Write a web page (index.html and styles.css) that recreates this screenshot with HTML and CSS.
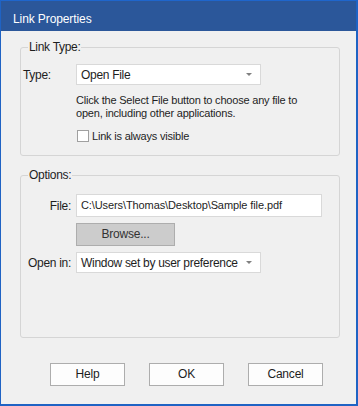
FILE: index.html
```html
<!DOCTYPE html>
<html>
<head>
<meta charset="utf-8">
<link rel="stylesheet" href="styles.css">
</head>
<body>
<div class="window">
  <div class="titlebar">Link Properties</div>
  <div class="content">
    <fieldset class="group group-type">
      <legend>Link Type:</legend>
      <div class="row type-row">
        <span class="label">Type:</span>
        <div class="select w185"><span class="value">Open File</span><span class="arrow"></span></div>
      </div>
      <p class="desc">Click the Select File button to choose any file to open, including other applications.</p>
      <label class="check"><span class="box"></span><span>Link is always visible</span></label>
    </fieldset>
    <fieldset class="group group-options">
      <legend>Options:</legend>
      <div class="row file-row">
        <span class="label right">File:</span>
        <div class="input">C:\Users\Thomas\Desktop\Sample file.pdf</div>
      </div>
      <div class="row browse-row">
        <span class="label right"></span>
        <div class="btn browse">Browse...</div>
      </div>
      <div class="row open-row">
        <span class="label right">Open in:</span>
        <div class="select w185"><span class="value">Window set by user preference</span><span class="arrow"></span></div>
      </div>
    </fieldset>
    <div class="buttons">
      <div class="btn">Help</div>
      <div class="btn">OK</div>
      <div class="btn">Cancel</div>
    </div>
  </div>
</div>
</body>
</html>
```

FILE: styles.css
```css
html, body {
  margin: 0;
  padding: 0;
  background: #f0f0f0;
}
body {
  width: 358px;
  height: 406px;
  overflow: hidden;
  font-family: "Liberation Sans", Arial, sans-serif;
  font-size: 11px;
  letter-spacing: -0.2px;
  color: #1e1e1e;
}
.window {
  box-sizing: border-box;
  width: 358px;
  height: 406px;
  border-left: 1px solid #1f63c4;
  border-right: 2px solid #1f63c4;
  border-bottom: 2px solid #1f63c4;
  border-top: 1px solid #1f66cc;
  display: flex;
  flex-direction: column;
  background: #f0f0f0;
}
.titlebar {
  box-sizing: border-box;
  height: 30px;
  background: #2b579a;
  color: #ffffff;
  font-size: 12px;
  letter-spacing: -0.1px;
  line-height: 15px;
  padding: 11px 0 0 12px;
  flex: none;
}
.content {
  flex: 1;
  display: flex;
  flex-direction: column;
  padding: 9px 16px 0 19px;
}
.group {
  margin: 0;
  border: 1px solid #d5d5d5;
  border-radius: 3px;
  padding: 0 0 0 2px;
  min-width: 0;
  box-sizing: border-box;
}
.group legend {
  margin-left: 5px;
  padding: 0 1px;
  line-height: 15px;
  font-size: 12px;
  letter-spacing: -0.3px;
  color: #1e1e1e;
}
.group-type {
  height: 116px;
}
.group-options {
  margin-top: 12px;
  height: 170px;
}
.row {
  display: flex;
  align-items: center;
}
.label {
  width: 53px;
  flex: none;
  font-size: 12px;
  letter-spacing: -0.3px;
}
.label.right {
  width: 48px;
  padding-right: 5px;
  text-align: right;
}
.type-row {
  margin-top: 9px;
}
.select {
  box-sizing: border-box;
  height: 21px;
  background: #ffffff;
  border: 1px solid #d9d9d9;
  display: flex;
  align-items: center;
  justify-content: space-between;
  padding: 0 8px 0 4px;
}
.select .value {
  white-space: nowrap;
  font-size: 12px;
  letter-spacing: -0.3px;
}
.w185 { width: 185px; }
.arrow {
  flex: none;
  width: 0;
  height: 0;
  border-left: 3px solid transparent;
  border-right: 3px solid transparent;
  border-top: 3px solid #808080;
}
.desc {
  margin: 9px 0 0 53px;
  width: 250px;
  line-height: 13px;
}
.check {
  display: flex;
  align-items: center;
  gap: 3px;
  margin: 10px 0 0 54px;
}
.box {
  box-sizing: border-box;
  width: 12px;
  height: 12px;
  border: 1px solid #a0a0a0;
  background: #ffffff;
}
.file-row {
  margin-top: 11px;
}
.input {
  box-sizing: border-box;
  width: 246px;
  height: 23px;
  line-height: 21px;
  background: #ffffff;
  border: 1px solid #d9d9d9;
  padding-left: 4px;
  font-size: 11px;
  letter-spacing: -0.1px;
  white-space: nowrap;
}
.browse-row {
  margin-top: 6px;
}
.open-row {
  margin-top: 6px;
}
.btn {
  box-sizing: border-box;
  width: 75px;
  height: 23px;
  line-height: 21px;
  text-align: center;
  background: #fdfdfd;
  border: 1px solid #adadad;
  font-size: 12px;
  letter-spacing: -0.2px;
}
.btn.browse {
  width: 99px;
  background: #cccccc;
  color: #333333;
}
.buttons {
  display: flex;
  justify-content: flex-end;
  gap: 24px;
  margin-top: 25px;
  padding-right: 17px;
}
```
